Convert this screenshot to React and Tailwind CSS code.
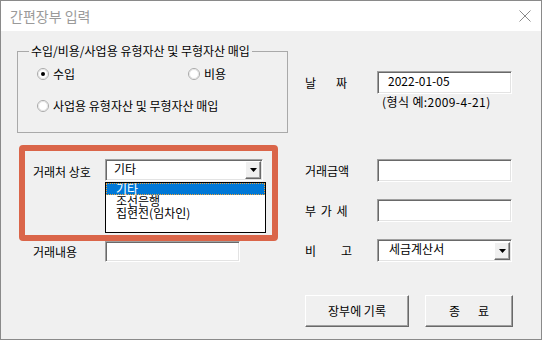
const Radio = ({ checked, label, className = "" }) => (
  <div className={`flex items-center gap-[4px] h-[14px] ${className}`}>
    <svg width="12" height="12" viewBox="0 0 12 12">
      <circle cx="6" cy="6" r="5.5" fill="#ffffff" stroke="#a8a8a8" />
      <circle cx="6" cy="6" r="4.5" fill="none" stroke="#e4e4e4" />
      {checked && <circle cx="6" cy="6" r="2" fill="#000000" />}
    </svg>
    <span className="leading-[14px]">{label}</span>
  </div>
);

const Field = ({ className = "", children }) => (
  <div
    className={`bg-white border border-t-[#a0a0a0] border-l-[#a0a0a0] border-b-white border-r-white shadow-[inset_1px_1px_0_#696969,inset_-1px_-1px_0_#e3e3e3] ${className}`}
  >
    {children}
  </div>
);

const ArrowButton = () => (
  <div className="w-[16px] h-[18px] bg-[#f0f0f0] border border-t-white border-l-white border-b-[#696969] border-r-[#696969] shadow-[inset_-1px_-1px_0_#a0a0a0] flex items-center justify-center">
    <svg width="7" height="4" viewBox="0 0 7 4">
      <path d="M0 0h7L3.5 4z" fill="#000000" />
    </svg>
  </div>
);

const Button = ({ className = "", children }) => (
  <div
    className={`h-[32px] bg-[#f0f0f0] border border-t-white border-l-white border-b-[#696969] border-r-[#696969] shadow-[inset_-1px_-1px_0_#a0a0a0] flex items-center justify-center ${className}`}
  >
    {children}
  </div>
);

export default function App() {
  return (
    <div className="w-[542px] h-[340px] border border-[#8a8a8a] bg-[#f0f0f0] flex flex-col text-[12px] text-black font-['Noto_Sans_CJK_KR',sans-serif] overflow-hidden">
      {/* title bar */}
      <div className="h-[30px] bg-white flex items-center justify-between pl-[9px] pr-[10px]">
        <span className="text-[14px] leading-[30px] text-[#9a9a9a]">간편장부 입력</span>
        <svg width="12" height="12" viewBox="0 0 12 12">
          <path d="M0.5 0.5l11 11M11.5 0.5l-11 11" stroke="#8a8a8a" strokeWidth="1" />
        </svg>
      </div>

      <div className="flex-1 flex">
        {/* left column */}
        <div className="w-[304px] flex flex-col">
          <div className="relative ml-[16px] mt-[20px] w-[271px] h-[82px] border border-[#a9a9a9] pl-[19px]">
            <span className="absolute left-[11px] -top-[8px] bg-[#f0f0f0] px-[2px] leading-[14px]">
              수입/비용/사업용 유형자산 및 무형자산 매입
            </span>
            <div className="flex mt-[15px]">
              <Radio checked label="수입" className="w-[151px]" />
              <Radio label="비용" />
            </div>
            <Radio label="사업용 유형자산 및 무형자산 매입" className="mt-[18px]" />
          </div>

          <div className="ml-[18px] mt-[12px] w-[259px] h-[96px] border-[6px] border-[#da6549] rounded-[4px]">
            <div className="flex items-center mt-[8px] h-[22px]">
              <span className="w-[80px] pl-[8px] mt-[4px] leading-[14px]">거래처 상호</span>
              <div className="relative">
                <Field className="w-[158px] h-[22px] flex items-center justify-between pr-[1px]">
                  <span className="pl-[8px] leading-[14px] -mt-[3px]">기타</span>
                  <ArrowButton />
                </Field>
                <div className="absolute left-0 top-[23px] w-[161px] h-[51px] bg-white border border-black">
                  <div className="h-[12px] leading-[12px] bg-[#0078d7] text-white pl-[10px] outline-1 outline-dotted outline-[#e9a23b] -outline-offset-1">
                    기타
                  </div>
                  <div className="h-[12px] leading-[12px] pl-[10px] whitespace-nowrap">조선은행</div>
                  <div className="h-[12px] leading-[12px] pl-[10px] whitespace-nowrap">집현전(임차인)</div>
                </div>
              </div>
            </div>
          </div>

          <div className="flex items-center h-[21px]">
            <span className="w-[104px] pl-[32px] leading-[14px]">거래내용</span>
            <Field className="w-[135px] h-[21px]" />
          </div>
        </div>

        {/* right column */}
        <div className="flex-1 flex flex-col">
          <div className="flex items-center mt-[40px] h-[23px]">
            <div className="w-[72px] flex gap-[20px] leading-[14px]">
              <span>날</span>
              <span>짜</span>
            </div>
            <Field className="w-[135px] h-[23px] flex items-center">
              <span className="pl-[10px] leading-[14px] -mt-[3px]">2022-01-05</span>
            </Field>
          </div>
          <span className="pl-[77px] mt-[1px] leading-[14px] tracking-[0.4px]">(형식 예:2009-4-21)</span>

          <div className="flex items-center mt-[50px] h-[23px]">
            <span className="w-[72px] leading-[14px]">거래금액</span>
            <Field className="w-[135px] h-[23px]" />
          </div>

          <div className="flex items-center mt-[17px] h-[23px]">
            <span className="w-[72px] leading-[14px] tracking-[1px]">부 가 세</span>
            <Field className="w-[135px] h-[23px]" />
          </div>

          <div className="flex items-center mt-[17px] h-[23px]">
            <div className="w-[72px] flex gap-[25px] leading-[14px]">
              <span>비</span>
              <span>고</span>
            </div>
            <Field className="w-[135px] h-[23px] flex items-center justify-between pr-[1px]">
              <span className="pl-[11px] leading-[14px] -mt-[3px]">세금계산서</span>
              <ArrowButton />
            </Field>
          </div>

          <div className="flex gap-[16px] mt-[33px]">
            <Button className="w-[104px]">장부에 기록</Button>
            <Button className="w-[88px] gap-[18px]">
              <span>종</span>
              <span>료</span>
            </Button>
          </div>
        </div>
      </div>
    </div>
  );
}
